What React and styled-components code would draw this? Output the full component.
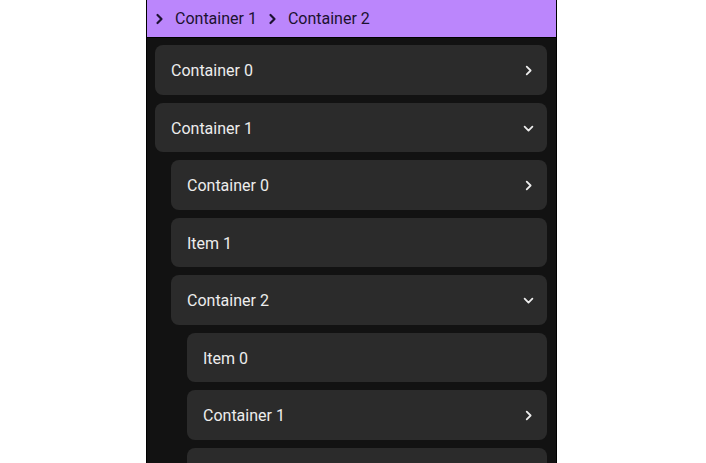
import React from 'react';
import styled, { createGlobalStyle } from 'styled-components';

const GlobalStyle = createGlobalStyle`
  html, body {
    margin: 0;
    padding: 0;
    background: #ffffff;
    font-family: Roboto, "Noto Sans", sans-serif;
  }
`;

const Page = styled.div`
  display: flex;
  justify-content: center;
  height: 463px;
  overflow: hidden;
`;

const Panel = styled.div`
  width: 409px;
  margin-left: -3px;
  background: #121212;
  border-left: 1px solid #000;
  border-right: 1px solid #000;
  display: flex;
  flex-direction: column;
`;

const Breadcrumbs = styled.div`
  height: 37px;
  background: #bb86fc;
  border-bottom: 1px solid #000;
  display: flex;
  align-items: center;
  padding-left: 8px;
  gap: 11px;
  color: #1c1230;
  font-size: 16px;
  flex-shrink: 0;
`;

const Crumb = styled.span`
  display: flex;
  align-items: center;
  gap: 10px;
`;

const List = styled.div`
  display: flex;
  flex-direction: column;
  gap: 8px;
  padding: 7px 9px 0 8px;
`;

const Row = styled.div`
  margin-left: ${p => p.level * 16}px;
  height: 49.5px;
  box-sizing: border-box;
  border-radius: 8px;
  background: #2b2b2b;
  display: flex;
  align-items: center;
  justify-content: space-between;
  padding: 2px 10px 0 16px;
  color: #ededed;
  font-size: 16px;
  flex-shrink: 0;
`;

const CrumbArrow = () => (
  <svg width="10" height="12" viewBox="0 0 10 12" fill="none" stroke="currentColor"
    strokeWidth="2.2" strokeLinecap="round" strokeLinejoin="round">
    <path d="M2.5 2l4 4-4 4" />
  </svg>
);

const Chevron = ({ dir }) => (
  <svg width="17" height="17" viewBox="0 0 24 24" fill="none" stroke="currentColor"
    strokeWidth="2.5" strokeLinecap="round" strokeLinejoin="round">
    {dir === 'down' ? <path d="M6.5 9.5l5.5 5.5 5.5-5.5" /> : <path d="M9.5 6.5l5.5 5.5-5.5 5.5" />}
  </svg>
);

const rows = [
  { level: 0, label: 'Container 0', icon: 'right' },
  { level: 0, label: 'Container 1', icon: 'down' },
  { level: 1, label: 'Container 0', icon: 'right' },
  { level: 1, label: 'Item 1' },
  { level: 1, label: 'Container 2', icon: 'down' },
  { level: 2, label: 'Item 0' },
  { level: 2, label: 'Container 1', icon: 'right' },
  { level: 2, label: 'Container 2', icon: 'right' },
];

export default function App() {
  return (
    <Page>
      <GlobalStyle />
      <Panel>
        <Breadcrumbs>
          <Crumb><CrumbArrow />Container 1</Crumb>
          <Crumb><CrumbArrow />Container 2</Crumb>
        </Breadcrumbs>
        <List>
          {rows.map((r, i) => (
            <Row key={i} level={r.level}>
              <span>{r.label}</span>
              {r.icon && <Chevron dir={r.icon} />}
            </Row>
          ))}
        </List>
      </Panel>
    </Page>
  );
}
